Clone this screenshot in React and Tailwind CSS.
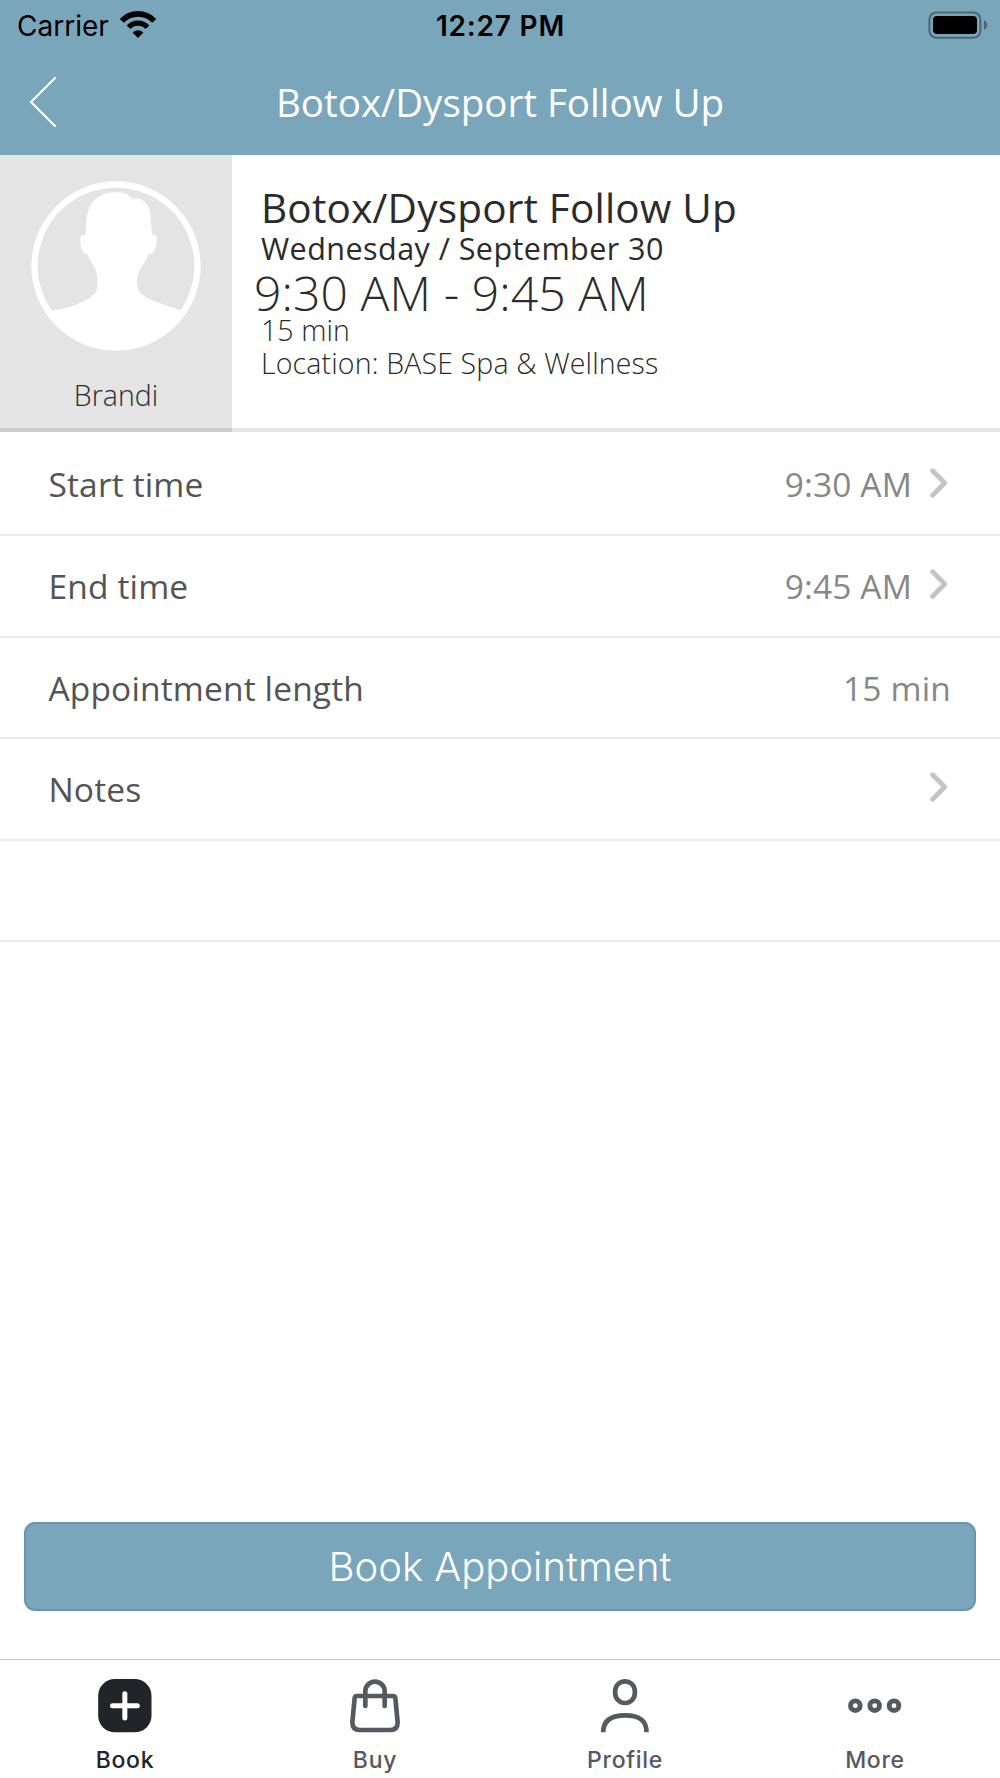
import { useState } from "react";

// icons
const WifiIcon = () => (
  <svg width="38" height="28" viewBox="0 0 38 28" fill="none" stroke="black">
    <path d="M2.8 9.9A22.2 22.2 0 0 1 35.2 9.9" strokeWidth="5.6" />
    <path d="M9.6 16.2A12.9 12.9 0 0 1 28.4 16.2" strokeWidth="5.2" />
    <path d="M19 27L13.6 21.4Q19 17 24.4 21.4Z" fill="black" stroke="none" />
  </svg>
);

const BatteryIcon = () => (
  <svg width="60" height="28" viewBox="0 0 60 28">
    <rect x="1.4" y="1.4" width="51" height="25.4" rx="7" fill="none" stroke="#4b6877" strokeWidth="2" />
    <rect x="5" y="5" width="44" height="18" rx="4" />
    <path d="M56 9Q59.3 11 59.3 14T56 19Z" fill="#4b6877" />
  </svg>
);

const Chevron = () => (
  <svg className="-mt-[3px] mr-[3px]" width="18" height="30" viewBox="0 0 18 30" fill="none" stroke="#c4c4c6" strokeWidth="4.8" strokeLinecap="round" strokeLinejoin="round">
    <path d="M2.6 2.8L14.8 15L2.6 27.2" />
  </svg>
);

const Avatar = () => (
  <svg width="170" height="170" viewBox="93 92 510 510">
    <defs>
      <clipPath id="face">
        <circle cx="348" cy="347" r="245" />
      </clipPath>
    </defs>
    <circle cx="348" cy="347" r="244.5" fill="none" stroke="white" strokeWidth="19" />
    <path
      clipPath="url(#face)"
      fill="white"
      d="M93 602V490L153 481C205 474 248 459 277 436C290 427 292 419 292 405C293 371 290 361 277 340C270 329 266 320 263 312C249 312 243 299 241 274C239 258 246 253 257 254C258 222 259 196 266 176C280 143 312 126 345 126C372 126 387 131 397 147C424 137 445 158 450 187C454 209 454 232 456 255C467 252 472 259 471 270C469 295 463 313 445 311C441 325 434 336 424 351C412 369 411 378 411 400C411 416 416 424 429 435C455 456 501 463 543 481L603 490V602Z"
    />
  </svg>
);

const BookIcon = () => (
  <svg width="54" height="54" viewBox="0 0 162 162">
    <rect x="0.500" y="0" width="160" height="160" rx="50" fill="#232429" />
    <path d="M80.500 44V117M43.500 80.500H118" stroke="white" strokeWidth="15" strokeLinecap="round" />
  </svg>
);

const BuyIcon = () => (
  <svg width="54" height="54" viewBox="0 0 162 162" fill="none" stroke="currentColor" strokeWidth="14" strokeLinecap="round">
    <path d="M27 51H135Q141 51 142 57L149 130Q149 153 127 153H35Q13 153 13 130L20 57Q21 51 27 51Z" />
    <path d="M52 81V37A29 29 0 0 1 110 37V81" />
  </svg>
);

const ProfileIcon = () => (
  <svg width="54" height="54" viewBox="0 0 162 162" fill="none" stroke="currentColor" strokeWidth="14">
    <rect x="51.500" y="7" width="59" height="65" rx="29.500" />
    <path d="M15.500 160C15.500 122 41 109 81 109S145.500 122 145.500 160" />
  </svg>
);

const MoreIcon = () => (
  <svg width="54" height="54" viewBox="0 0 162 162" fill="none" stroke="currentColor" strokeWidth="14.500">
    <circle cx="22" cy="80" r="14.500" />
    <circle cx="80" cy="80" r="14.500" />
    <circle cx="138" cy="80" r="14.500" />
  </svg>
);

// appointment rows
const rows = [
  { label: "Start time", value: "9:30 AM", link: true, height: "h-[104px] pt-[2px]" },
  { label: "End time", value: "9:45 AM", link: true, height: "h-[101.500px]" },
  { label: "Appointment length", value: "15 min", link: false, height: "h-[101.500px]" },
  { label: "Notes", value: "", link: true, height: "h-[101.500px]" },
  { label: "", value: "", link: false, height: "h-[101px]" },
];

const tabs = [
  { title: "Book", icon: <BookIcon /> },
  { title: "Buy", icon: <BuyIcon /> },
  { title: "Profile", icon: <ProfileIcon /> },
  { title: "More", icon: <MoreIcon /> },
];

const App = () => {
  const [active, setActive] = useState("Book");

  return (
    <div className="flex h-[1778px] w-[1000px] flex-col overflow-hidden bg-white font-['Open_Sans',sans-serif] text-[#2b2b2b]">
      {/* header */}
      <header className="h-[155px] shrink-0 bg-[#7aa6bb]">
        <div className="grid h-[50px] grid-cols-3 items-center pr-[12px] pl-[17px] font-['Inter',sans-serif] text-black">
          <div className="flex items-center gap-[10px]">
            <span className="mt-px text-[28px]">Carrier</span>
            <WifiIcon />
          </div>
          <span className="mt-px -ml-[4px] text-center text-[28px] font-semibold tracking-[0.8px]">12:27 PM</span>
          <div className="flex justify-end">
            <BatteryIcon />
          </div>
        </div>
        <div className="flex h-[103px] items-center justify-between px-[28px]">
          <svg width="30" height="54" viewBox="0 0 30 54" fill="none" stroke="white" strokeWidth="2.2" strokeLinecap="round">
            <path d="M27 3L3 27L27 51" />
          </svg>
          <h1 className="mt-[2px] text-[38.500px] text-white">Botox/Dysport Follow Up</h1>
          <div className="w-[30px]" />
        </div>
      </header>

      {/* summary */}
      <section className="flex h-[277px] shrink-0">
        <div className="flex w-[232px] flex-col items-center border-b-4 border-[#cdcdcd] bg-[#e4e4e4] pt-[26px]">
          <Avatar />
          <span className="mt-[22px] text-[28.500px] leading-[44px] font-light">Brandi</span>
        </div>
        <div className="flex flex-1 flex-col border-b-4 border-[#e4e4e4] pt-[27.500px] pl-[29px] whitespace-nowrap">
          <h2 className="h-[49px] overflow-hidden text-[40.500px] leading-[49px] tracking-[0.2px]">Botox/Dysport Follow Up</h2>
          <p className="text-[30.500px] leading-[32.500px] tracking-[0.450px]">Wednesday / September 30</p>
          <p className="-ml-[7px] text-[48px] leading-[57px] font-light tracking-[0.1px]">9:30 AM - 9:45 AM</p>
          <p className="text-[28.500px] leading-[18px] font-light tracking-[0.1px]">15 min</p>
          <p className="text-[28.500px] leading-[49px] font-light tracking-[0.150px]">Location: BASE Spa &amp; Wellness</p>
        </div>
      </section>

      {/* details */}
      <ul className="shrink-0">
        {rows.map((item, index) => (
          <li
            key={index}
            className={`${item.height} flex items-center justify-between border-b-2 border-[#ececec] pr-[49px] pl-[48.500px] text-[33.500px] tracking-[0.150px]`}
          >
            <span className="mt-px text-[#545454]">{item.label}</span>
            <div className="flex items-center gap-[18px] text-[#878787]">
              <span className="mt-px">{item.value}</span>
              {item.link && <Chevron />}
            </div>
          </li>
        ))}
      </ul>

      {/* bottom */}
      <div className="mt-auto px-6 pb-[48px]">
        <button className="flex h-[89px] w-full items-center justify-center rounded-[11px] border-2 border-[#6796ad] bg-[#7aa6bb] font-['Inter',sans-serif] text-[40px] font-light text-white">
          Book Appointment
        </button>
      </div>
      <nav className="grid h-[119px] shrink-0 grid-cols-4 border-t border-[#c4c4c4] bg-white font-['Inter',sans-serif]">
        {tabs.map((item) => (
          <button
            key={item.title}
            onClick={() => setActive(item.title)}
            className={`flex flex-col items-center pt-[19px] ${active === item.title ? "text-[#232429]" : "text-[#565862]"}`}
          >
            {item.icon}
            <span className="mt-[10px] text-[23px] leading-[34px] font-medium tracking-[0.7px]">{item.title}</span>
          </button>
        ))}
      </nav>
    </div>
  );
};
export default App;
